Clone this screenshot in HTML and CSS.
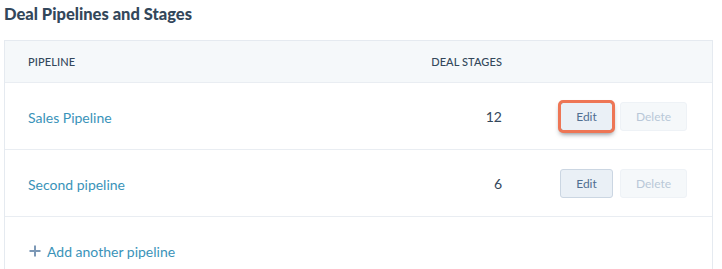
FILE: index.html
```html
<!DOCTYPE html>
<html>
<head>
<meta charset="utf-8">
<link rel="stylesheet" href="styles.css">
</head>
<body>
<div class="page">
  <h2 class="title">Deal Pipelines and Stages</h2>
  <div class="table">
    <div class="row head">
      <div class="c-name">PIPELINE</div>
      <div class="c-stages">DEAL STAGES</div>
      <div class="c-actions"></div>
    </div>
    <div class="row">
      <div class="c-name"><a class="link">Sales Pipeline</a></div>
      <div class="c-stages num">12</div>
      <div class="c-actions">
        <button class="btn edit highlight">Edit</button>
        <button class="btn del">Delete</button>
      </div>
    </div>
    <div class="row">
      <div class="c-name"><a class="link">Second pipeline</a></div>
      <div class="c-stages num">6</div>
      <div class="c-actions">
        <button class="btn edit">Edit</button>
        <button class="btn del">Delete</button>
      </div>
    </div>
    <div class="row add">
      <div class="c-name">
        <a class="link add-link"><svg class="plus" width="12" height="12" viewBox="0 0 12 12"><path d="M6 0.5v11M0.5 6h11" stroke="#7c98b6" stroke-width="2" fill="none"/></svg>Add another pipeline</a>
      </div>
    </div>
  </div>
</div>
</body>
</html>
```

FILE: styles.css
```css
html, body {
  margin: 0;
  padding: 0;
  background: #fff;
  overflow: hidden;
}
body {
  font-family: Lato, "Noto Sans", sans-serif;
  color: #33475b;
}
.page {
  padding: 0 9px 0 4px;
  width: 709px;
}
.title {
  margin: 0;
  padding-top: 4px;
  height: 40px;
  box-sizing: border-box;
  font-size: 16.5px;
  font-weight: 900;
  line-height: 20px;
  color: #33475b;
}
.table {
  border: 1px solid #e5eaf0;
  border-bottom: none;
  height: 229px;
  box-sizing: border-box;
  overflow: hidden;
}
.row {
  display: flex;
  align-items: center;
  height: 67px;
  padding: 0 25px 0 23px;
  border-top: 1px solid #e9edf2;
  box-sizing: border-box;
}
.row.head {
  height: 41px;
  border-top: none;
  background: #f5f8fa;
  font-size: 11px;
  font-weight: 500;
  letter-spacing: 0.1px;
  color: #33475b;
}
.c-name {
  flex: 1;
}
.c-stages {
  width: 120px;
  text-align: right;
}
.c-actions {
  width: 185px;
  display: flex;
  justify-content: flex-end;
  gap: 7px;
}
.head .c-actions {
  height: 1px;
}
.link {
  color: #3a93b9;
  font-size: 14px;
  text-decoration: none;
}
.num {
  font-size: 14px;
  color: #33475b;
}
.btn {
  font-family: Lato, "Noto Sans", sans-serif;
  font-size: 12px;
  height: 29px;
  border-radius: 3px;
  padding: 0;
  box-sizing: border-box;
}
.edit {
  width: 53px;
  background: #eaf0f6;
  border: 1px solid #cbd6e2;
  color: #506e91;
}
.del {
  width: 67px;
  background: #f5f8fa;
  border: 1px solid #eef2f6;
  color: #b9c8d8;
}
.highlight {
  outline: 3px solid #ee7655;
  outline-offset: -1px;
  border-color: #6f7c88;
  box-shadow: 0 3px 5px rgba(40, 50, 60, 0.6);
}
.row.add {
  align-items: flex-start;
  padding-top: 24px;
}
.add-link {
  display: inline-flex;
  align-items: center;
  gap: 6px;
}
.plus {
  margin-left: 1px;
}
```
